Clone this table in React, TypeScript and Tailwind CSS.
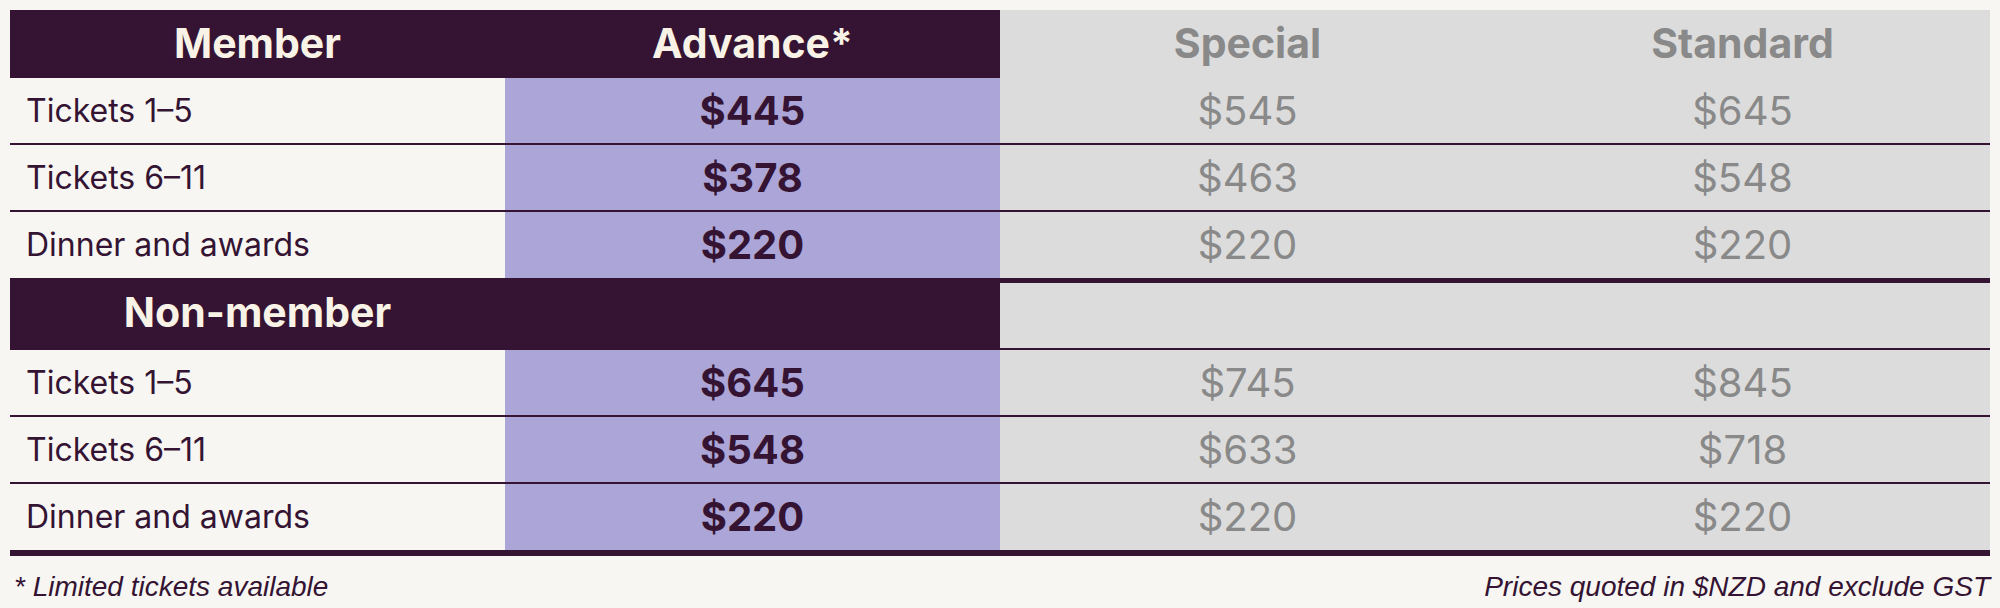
import React from 'react'

type PriceRow = { label: string; advance: string; special: string; standard: string }

const memberRows: PriceRow[] = [
  { label: 'Tickets 1–5', advance: '$445', special: '$545', standard: '$645' },
  { label: 'Tickets 6–11', advance: '$378', special: '$463', standard: '$548' },
  { label: 'Dinner and awards', advance: '$220', special: '$220', standard: '$220' },
]

const nonMemberRows: PriceRow[] = [
  { label: 'Tickets 1–5', advance: '$645', special: '$745', standard: '$845' },
  { label: 'Tickets 6–11', advance: '$548', special: '$633', standard: '$718' },
  { label: 'Dinner and awards', advance: '$220', special: '$220', standard: '$220' },
]

const Row = ({ row, className }: { row: PriceRow; className: string }) => (
  <div className={`grid grid-cols-4 border-[#341432] ${className}`}>
    <div className="flex items-center bg-[#f7f6f2] pl-4 text-[32px] text-[#341432]">{row.label}</div>
    <div className="flex items-center justify-center bg-[#aca5d7] text-[40px] font-bold text-[#341432]">
      {row.advance}
    </div>
    <div className="flex items-center justify-center bg-[#dcdcdc] text-[40px] text-[#898989]">{row.special}</div>
    <div className="flex items-center justify-center bg-[#dcdcdc] text-[40px] text-[#898989]">{row.standard}</div>
  </div>
)

const App = () => {
  return (
    <div className="min-h-[608px] w-full bg-[#f7f6f2] px-[10px] pt-[10px] font-['Inter',sans-serif]">
      {/* Header */}
      <div className="grid h-[68px] grid-cols-4 text-[41px] font-bold">
        <div className="flex items-center justify-center bg-[#341432] text-[#f8f3e6]">Member</div>
        <div className="flex items-center justify-center bg-[#341432] text-[#f8f3e6]">Advance*</div>
        <div className="flex items-center justify-center bg-[#dcdcdc] text-[#898989]">Special</div>
        <div className="flex items-center justify-center bg-[#dcdcdc] text-[#898989]">Standard</div>
      </div>

      {memberRows.map((row, idx) => (
        <Row
          key={idx}
          row={row}
          className={idx === memberRows.length - 1 ? 'h-[66px]' : 'h-[67px] border-b-2'}
        />
      ))}

      {/* Non-member band */}
      <div className="grid h-[72px] grid-cols-4 border-b-2 border-[#341432]">
        <div className="flex items-center justify-center bg-[#341432] text-[41px] font-bold text-[#f8f3e6]">
          Non-member
        </div>
        <div className="bg-[#341432]" />
        <div className="col-span-2 border-t-[5px] border-[#341432] bg-[#dcdcdc]" />
      </div>

      {nonMemberRows.map((row, idx) => (
        <Row
          key={idx}
          row={row}
          className={idx === nonMemberRows.length - 1 ? 'h-[72px] border-b-[6px]' : 'h-[67px] border-b-2'}
        />
      ))}

      {/* Notes */}
      <div className="flex items-center justify-between pt-[10px] pl-[4px] font-['Liberation_Sans',Arial,sans-serif] text-[28px] italic text-[#341432]">
        <span>* Limited tickets available</span>
        <span>Prices quoted in $NZD and exclude GST</span>
      </div>
    </div>
  )
}

export default App
